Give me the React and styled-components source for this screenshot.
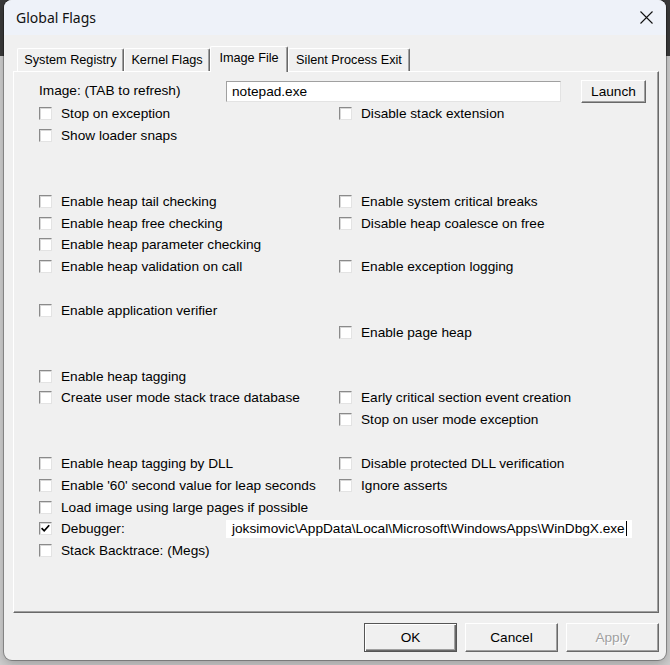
import React from "react";
import styled, { createGlobalStyle } from "styled-components";

const GlobalStyle = createGlobalStyle`
  html, body {
    margin: 0;
    padding: 0;
  }
  body {
    background: #c9c9c9;
    font-family: "Liberation Sans", Arial, sans-serif;
    color: #000;
  }
`;

const Page = styled.div`
  width: 670px;
  height: 665px;
  box-sizing: border-box;
  padding-left: 4px;
  background: linear-gradient(to bottom, #3a3a3a 0, #3a3a3a 56px, #cfcfcf 56px);
`;

const Window = styled.div`
  width: 662px;
  height: 660px;
  display: flex;
  flex-direction: column;
  background: #f0f0f0;
  border-radius: 8px;
  box-shadow: 0 0 0 1px rgba(0, 0, 0, 0.28), 0 4px 12px rgba(0, 0, 0, 0.25);
  overflow: hidden;
`;

const TitleBar = styled.div`
  height: 35px;
  flex: none;
  display: flex;
  align-items: center;
  justify-content: space-between;
  padding: 0 13px 0 12px;
  background: #eef2f9;
`;

const Title = styled.span`
  font-family: "Noto Sans", "Open Sans", sans-serif;
  font-size: 14px;
  color: #111;
`;

const CloseIcon = () => (
  <svg width="13" height="13" viewBox="0 0 13 13">
    <path d="M0.5 0.5 L12.5 12.5 M12.5 0.5 L0.5 12.5" stroke="#111" strokeWidth="1.1" fill="none" />
  </svg>
);

const Body = styled.div`
  flex: 1;
  display: flex;
  flex-direction: column;
  padding: 11px 7px 8px 9px;
  font-size: 13.65px;
`;

const TabStrip = styled.div`
  height: 25px;
  display: flex;
  align-items: flex-end;
  padding-left: 4px;
`;

const Tab = styled.div`
  box-sizing: border-box;
  width: ${({ $width }) => $width}px;
  height: ${({ $active }) => ($active ? 26 : 23)}px;
  margin-bottom: ${({ $active }) => ($active ? -1 : 0)}px;
  padding-bottom: ${({ $active }) => ($active ? 3 : 0)}px;
  display: flex;
  align-items: center;
  justify-content: center;
  font-size: 12.7px;
  white-space: nowrap;
  background: #f0f0f0;
  border-top: 1px solid #fff;
  border-left: 1px solid #fff;
  border-right: 1px solid #696969;
  box-shadow: inset -1px 0 #a0a0a0;
  border-radius: 2px 2px 0 0;
  position: relative;
  z-index: ${({ $active }) => ($active ? 1 : 0)};
`;

const Panel = styled.div`
  box-sizing: border-box;
  height: 542px;
  padding: 9px 0 0 25px;
  border-top: 1px solid #fff;
  border-left: 1px solid #fff;
  border-right: 1px solid #696969;
  border-bottom: 1px solid #696969;
  box-shadow: inset -1px -1px #a0a0a0;
`;

const HeaderRow = styled.div`
  height: 21px;
  display: flex;
  align-items: center;
`;

const ImageLabel = styled.span`
  width: 187px;
  margin-top: -2px;
`;

const TextBox = styled.div`
  box-sizing: border-box;
  width: 335px;
  height: 21px;
  display: flex;
  align-items: center;
  padding-left: 5px;
  background: #fff;
  border: 1px solid;
  border-color: #a0a0a0 #e3e3e3 #e3e3e3 #a0a0a0;
`;

const PushButton = styled.div`
  box-sizing: border-box;
  width: ${({ $width }) => $width}px;
  height: ${({ $height }) => $height}px;
  display: flex;
  align-items: center;
  justify-content: center;
  background: #f0f0f0;
  color: ${({ $disabled }) => ($disabled ? "#a0a0a0" : "#000")};
  text-shadow: ${({ $disabled }) => ($disabled ? "1px 1px #fff" : "none")};
  border: 1px solid;
  border-color: ${({ $default }) => ($default ? "#555" : "#fff #696969 #696969 #fff")};
  box-shadow: ${({ $default }) =>
    $default
      ? "inset 1px 1px #fff, inset -1px -1px #696969, inset -2px -2px #a0a0a0"
      : "inset -1px -1px #a0a0a0"};
`;

const LaunchButton = styled(PushButton)`
  margin-left: 20px;
`;

const FlagGrid = styled.div`
  display: grid;
  margin-top: 1px;
  grid-template-columns: 300px 1fr;
  grid-template-rows: repeat(21, 21.85px);
`;

const Flag = styled.div`
  grid-row: ${({ $row }) => $row + 1};
  grid-column: ${({ $col }) => $col + 1};
  display: flex;
  align-items: center;
  gap: 9px;
  white-space: nowrap;
`;

const DebuggerRow = styled.div`
  grid-row: 20;
  grid-column: 1 / -1;
  display: flex;
  align-items: center;
  gap: 9px;
`;

const DebuggerLabel = styled.span`
  width: 165px;
`;

const DebugField = styled.div`
  width: 406px;
  height: 18px;
  margin-left: -9px;
  display: flex;
  align-items: center;
  padding-left: 6px;
  box-sizing: border-box;
  background: #fff;
  white-space: nowrap;
  overflow: hidden;
`;

const Caret = styled.span`
  flex: none;
  width: 1px;
  height: 15px;
  margin-left: 1px;
  background: #000;
`;

const Box = styled.span`
  box-sizing: border-box;
  flex: none;
  width: 13px;
  height: 13px;
  display: flex;
  align-items: center;
  justify-content: center;
  background: #fff;
  border: 1px solid;
  border-color: #8a8a8a #e3e3e3 #e3e3e3 #8a8a8a;
  box-shadow: inset 1px 1px #d8d8d8;
`;

const CheckBox = ({ checked }) => (
  <Box>
    {checked && (
      <svg width="11" height="11" viewBox="0 0 11 11">
        <path d="M1.6 5.2 L4.2 7.8 L9.2 2.2" stroke="#000" strokeWidth="1.7" fill="none" />
      </svg>
    )}
  </Box>
);

const ButtonRow = styled.div`
  display: flex;
  justify-content: flex-end;
  gap: 8px;
  margin-top: 10px;
`;

const tabs = [
  { label: "System Registry", width: 107 },
  { label: "Kernel Flags", width: 86 },
  { label: "Image File", width: 78, active: true },
  { label: "Silent Process Exit", width: 122 },
];

const flags = [
  { row: 0, col: 0, label: "Stop on exception" },
  { row: 1, col: 0, label: "Show loader snaps" },
  { row: 4, col: 0, label: "Enable heap tail checking" },
  { row: 5, col: 0, label: "Enable heap free checking" },
  { row: 6, col: 0, label: "Enable heap parameter checking" },
  { row: 7, col: 0, label: "Enable heap validation on call" },
  { row: 9, col: 0, label: "Enable application verifier" },
  { row: 12, col: 0, label: "Enable heap tagging" },
  { row: 13, col: 0, label: "Create user mode stack trace database" },
  { row: 16, col: 0, label: "Enable heap tagging by DLL" },
  { row: 17, col: 0, label: "Enable '60' second value for leap seconds" },
  { row: 18, col: 0, label: "Load image using large pages if possible" },
  { row: 20, col: 0, label: "Stack Backtrace: (Megs)" },
  { row: 0, col: 1, label: "Disable stack extension" },
  { row: 4, col: 1, label: "Enable system critical breaks" },
  { row: 5, col: 1, label: "Disable heap coalesce on free" },
  { row: 7, col: 1, label: "Enable exception logging" },
  { row: 10, col: 1, label: "Enable page heap" },
  { row: 13, col: 1, label: "Early critical section event creation" },
  { row: 14, col: 1, label: "Stop on user mode exception" },
  { row: 16, col: 1, label: "Disable protected DLL verification" },
  { row: 17, col: 1, label: "Ignore asserts" },
];

const App = () => {
  return (
    <Page>
      <GlobalStyle />
      <Window>
        <TitleBar>
          <Title>Global Flags</Title>
          <CloseIcon />
        </TitleBar>
        <Body>
          <TabStrip>
            {tabs.map((t) => (
              <Tab key={t.label} $width={t.width} $active={t.active}>
                {t.label}
              </Tab>
            ))}
          </TabStrip>
          <Panel>
            <HeaderRow>
              <ImageLabel>Image: (TAB to refresh)</ImageLabel>
              <TextBox>notepad.exe</TextBox>
              <LaunchButton $width={65} $height={23}>Launch</LaunchButton>
            </HeaderRow>
            <FlagGrid>
              {flags.map((f) => (
                <Flag key={f.label} $row={f.row} $col={f.col}>
                  <CheckBox />
                  <span>{f.label}</span>
                </Flag>
              ))}
              <DebuggerRow>
                <CheckBox checked />
                <DebuggerLabel>Debugger:</DebuggerLabel>
                <DebugField>
                  joksimovic\AppData\Local\Microsoft\WindowsApps\WinDbgX.exe
                  <Caret />
                </DebugField>
              </DebuggerRow>
            </FlagGrid>
          </Panel>
          <ButtonRow>
            <PushButton $width={93} $height={29} $default>OK</PushButton>
            <PushButton $width={93} $height={29}>Cancel</PushButton>
            <PushButton $width={93} $height={29} $disabled>Apply</PushButton>
          </ButtonRow>
        </Body>
      </Window>
    </Page>
  );
};

export default App;
